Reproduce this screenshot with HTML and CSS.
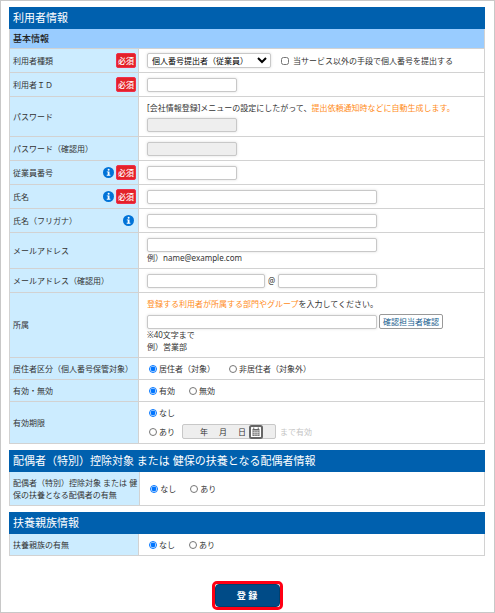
FILE: index.html
```
<!DOCTYPE html>
<html lang="ja">
<head>
  <meta charset="UTF-8">
  <meta name="viewport" content="width=device-width, initial-scale=1.0">
  <title>利用者情報</title>
  <link rel="stylesheet" href="styles.css">
</head>
<body>
  <svg class="sprite" aria-hidden="true">
    <symbol id="info" viewBox="0 0 22 22">
      <circle cx="11" cy="11" r="11" fill="#0073d8"/>
      <circle cx="11.3" cy="5.4" r="2" fill="#fff"/>
      <path d="M7.6 8.8h5.4v6.8h1.8v1.9H7.4v-1.9h2v-4.9H7.6z" fill="#fff"/>
    </symbol>
  </svg>

  <form class="page">
    <table class="form-table">
      <thead>
        <tr><th colspan="2" class="title">利用者情報</th></tr>
        <tr><th colspan="2" class="subtitle">基本情報</th></tr>
      </thead>
      <tbody>
        <tr>
          <th><div class="name"><label for="type">利用者種類</label><span class="required">必須</span></div></th>
          <td>
            <div class="line">
              <select id="type" class="type"><option>個人番号提出者（従業員）</option></select>
              <label class="check"><input type="checkbox">当サービス以外の手段で個人番号を提出する</label>
            </div>
          </td>
        </tr>
        <tr>
          <th><div class="name"><label for="user-id">利用者ＩＤ</label><span class="required">必須</span></div></th>
          <td><input type="text" id="user-id" class="text short"></td>
        </tr>
        <tr>
          <th><label for="password">パスワード</label></th>
          <td class="tall">
            <p class="lead">[会社情報登録]メニューの設定にしたがって、<span class="note">提出依頼通知時などに自動生成します。</span></p>
            <input type="password" id="password" class="text short" disabled>
          </td>
        </tr>
        <tr>
          <th><label for="password2">パスワード（確認用）</label></th>
          <td><input type="password" id="password2" class="text short" disabled></td>
        </tr>
        <tr>
          <th><div class="name"><label for="emp-no">従業員番号</label><svg class="info"><use href="#info"/></svg><span class="required">必須</span></div></th>
          <td><input type="text" id="emp-no" class="text short"></td>
        </tr>
        <tr>
          <th><div class="name"><label for="fullname">氏名</label><svg class="info"><use href="#info"/></svg><span class="required">必須</span></div></th>
          <td><input type="text" id="fullname" class="text long"></td>
        </tr>
        <tr>
          <th><div class="name"><label for="kana">氏名（フリガナ）</label><svg class="info last"><use href="#info"/></svg></div></th>
          <td><input type="text" id="kana" class="text long"></td>
        </tr>
        <tr>
          <th><label for="mail">メールアドレス</label></th>
          <td class="tall">
            <input type="text" id="mail" class="text long">
            <p>例）name@example.com</p>
          </td>
        </tr>
        <tr>
          <th><label for="mail2">メールアドレス（確認用）</label></th>
          <td>
            <div class="line mail">
              <input type="text" id="mail2" class="text account">
              <span>@</span>
              <input type="text" class="text domain" aria-label="ドメイン">
            </div>
          </td>
        </tr>
        <tr>
          <th><label for="group">所属</label></th>
          <td class="tall">
            <p class="lead"><span class="note">登録する利用者が所属する部門やグループ</span>を入力してください。</p>
            <div class="line group">
              <input type="text" id="group" class="text long">
              <button type="button" class="confirm">確認担当者確認</button>
            </div>
            <p>※40文字まで</p>
            <p>例）営業部</p>
          </td>
        </tr>
        <tr class="compact">
          <th>居住者区分（個人番号保管対象）</th>
          <td>
            <div class="line radios">
              <label><input type="radio" name="resident" checked>居住者（対象）</label>
              <label><input type="radio" name="resident">非居住者（対象外）</label>
            </div>
          </td>
        </tr>
        <tr class="compact">
          <th>有効・無効</th>
          <td>
            <div class="line radios">
              <label><input type="radio" name="valid" checked>有効</label>
              <label><input type="radio" name="valid">無効</label>
            </div>
          </td>
        </tr>
        <tr>
          <th>有効期限</th>
          <td class="tall">
            <div class="line radios">
              <label><input type="radio" name="limit" checked>なし</label>
            </div>
            <div class="line radios limit">
              <label><input type="radio" name="limit">あり</label>
              <div class="date">
                <input type="text" class="year" aria-label="年" disabled>年
                <input type="text" aria-label="月" disabled>月
                <input type="text" aria-label="日" disabled>日
                <button type="button" class="calendar" aria-label="カレンダー" disabled>
                  <svg viewBox="0 0 28 28">
                    <rect x="2" y="2" width="24" height="24" rx="3" fill="#fff" stroke="#666" stroke-width="4"/>
                    <path d="M7 8h14v14H7z" fill="#666"/>
                    <path d="M7 11.5h14M7 15h14M7 18.5h14M10.5 11v11M14 11v11M17.5 11v11" stroke="#fff" stroke-width="1"/>
                    <path d="M9.5 5v3M18.5 5v3" stroke="#666" stroke-width="2"/>
                  </svg>
                </button>
              </div>
              <span class="until">まで有効</span>
            </div>
          </td>
        </tr>
      </tbody>
    </table>

    <table class="form-table">
      <thead>
        <tr><th colspan="2" class="title">配偶者（特別）控除対象 または 健保の扶養となる配偶者情報</th></tr>
      </thead>
      <tbody>
        <tr>
          <th class="tall">配偶者（特別）控除対象 または 健<br>保の扶養となる配偶者の有無</th>
          <td>
            <div class="line radios">
              <label><input type="radio" name="spouse" checked>なし</label>
              <label><input type="radio" name="spouse">あり</label>
            </div>
          </td>
        </tr>
      </tbody>
    </table>

    <table class="form-table">
      <thead>
        <tr><th colspan="2" class="title">扶養親族情報</th></tr>
      </thead>
      <tbody>
        <tr class="compact">
          <th>扶養親族の有無</th>
          <td>
            <div class="line radios">
              <label><input type="radio" name="family" checked>なし</label>
              <label><input type="radio" name="family">あり</label>
            </div>
          </td>
        </tr>
      </tbody>
    </table>

    <div class="actions">
      <div class="highlight"><button type="submit" class="submit">登 録</button></div>
    </div>
  </form>
</body>
</html>
```
FILE: styles.css
```
* {
  box-sizing: border-box;
}
body {
  margin: 0;
  background: #fff;
  color: #333;
  font-family: "Noto Sans", "Noto Sans CJK JP", sans-serif;
  font-size: 8px;
  line-height: 12px;
}
p {
  margin: 0;
}
input, select, button {
  margin: 0;
  font: inherit;
}
.sprite {
  display: none;
}
.page {
  min-height: 100vh;
  padding: 6px 9px 1px 8px;
  border: 1px solid #c8c8c8;
}

/* tables */
.form-table {
  width: 100%;
  margin-bottom: 6px;
  border-collapse: collapse;
}
.form-table th, .form-table td {
  height: 24px;
  padding: 0 3px;
  border: 1px solid #d2d2d2;
  text-align: left;
  font-weight: normal;
  vertical-align: middle;
}
.form-table tbody th {
  width: 129px;
  padding-right: 2px;
  background: #ccecff;
  white-space: nowrap;
}
.form-table tbody td {
  padding: 0 8px;
}
.form-table .compact th, .form-table .compact td {
  height: 22px;
}
.form-table tbody .tall {
  padding-top: 5px;
  padding-bottom: 4px;
}
.form-table .title {
  height: 21px;
  background: #0060ae;
  border-color: #0060ae;
  color: #fff;
  font-size: 11px;
}
.form-table .subtitle {
  height: 20px;
  background: #99ccff;
  color: #222;
  font-size: 9px;
  font-weight: 500;
}

/* label cell */
.name {
  display: flex;
  align-items: center;
  gap: 2px;
}
.name label {
  flex: 1;
}
.info {
  width: 11px;
  height: 11px;
}
.info.last {
  margin-right: 2px;
}
.required {
  width: 20px;
  height: 15px;
  border: 1px solid #f0304c;
  border-radius: 2px;
  background: #e32229;
  color: #fff;
  line-height: 13px;
  text-align: center;
  font-weight: 500;
}

/* fields */
.text {
  display: block;
  height: 14px;
  padding: 0 3px;
  border: 1px solid #c8c8c8;
  border-radius: 2px;
  background: #fff;
  box-shadow: 0 0 3px #ddd;
}
.text:disabled {
  background: #eee;
}
.short {
  width: 90px;
}
.long {
  width: 230px;
}
.account {
  width: 118px;
}
.domain {
  width: 99px;
}
.lead {
  margin-bottom: 4px;
}
.note {
  color: #ff8c1a;
}
.line {
  display: flex;
  align-items: center;
}
.type {
  width: 124px;
  height: 15px;
  padding: 0;
  border: 1px solid #c8c8c8;
  border-radius: 2px;
  background: #fff;
  box-shadow: 0 0 3px #ddd;
  color: #000;
}
.check {
  display: flex;
  align-items: center;
  gap: 4px;
  margin-left: 10px;
}
.check input, .radios label input {
  width: 8px;
  height: 8px;
}
.mail {
  gap: 3px;
}
.group {
  gap: 2px;
}
.confirm {
  height: 15px;
  padding: 0 3px;
  border: 1px solid #999;
  border-radius: 2px;
  background: #fff;
  color: #17608f;
  line-height: 13px;
  white-space: nowrap;
}
.radios {
  gap: 14px;
  padding-left: 2px;
}
.radios label {
  display: flex;
  align-items: center;
  gap: 2px;
}
.limit {
  gap: 7px;
  margin-top: 5px;
}
.date {
  display: flex;
  align-items: center;
  width: 94px;
  height: 15px;
  border: 1px solid #c8c8c8;
  border-radius: 2px;
  background: #eee;
}
.date input {
  width: 11px;
  height: 12px;
  padding: 0;
  border: 0;
  background: none;
}
.date .year {
  width: 17px;
}
.calendar {
  width: 14px;
  height: 14px;
  margin-left: 3px;
  padding: 0;
  border: 0;
  background: none;
}
.calendar svg {
  display: block;
  width: 14px;
  height: 14px;
}
.until {
  margin-left: -3px;
  color: #c4c4c4;
}

/* submit */
.actions {
  display: flex;
  justify-content: center;
  padding-top: 19px;
}
.highlight {
  border: 3px solid #ff0014;
  border-radius: 5px;
}
.submit {
  display: block;
  width: 65px;
  height: 23px;
  padding: 0;
  border: 1px solid #00406f;
  border-radius: 4px;
  background: #004b87;
  color: #fff;
  font-size: 9px;
  font-weight: bold;
}
```
